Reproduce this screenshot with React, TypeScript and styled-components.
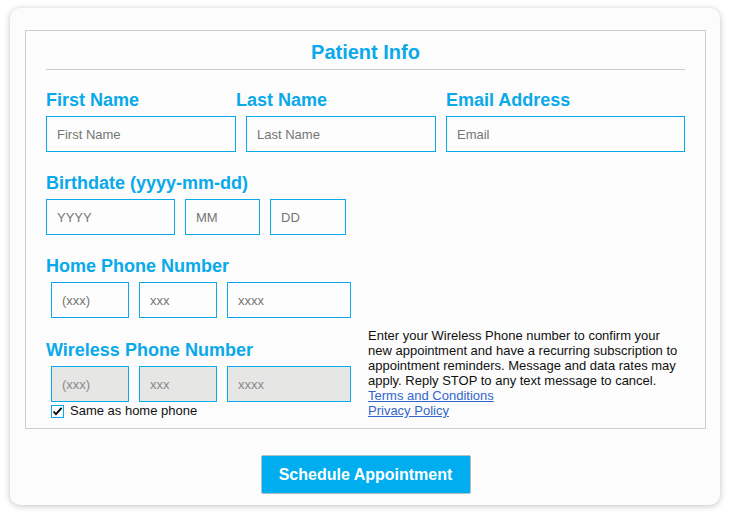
import React from "react";
import styled, { createGlobalStyle } from "styled-components";

const BLUE = "#0aa9e9";

const GlobalStyle = createGlobalStyle`
  body {
    margin: 0;
    background: #ffffff;
    font-family: "Liberation Sans", Arial, sans-serif;
  }
`;

const Card = styled.div`
  box-sizing: border-box;
  width: 710px;
  height: 497px;
  margin: 8px 10px;
  padding: 22px 14px 11px 15px;
  background: #fbfcfb;
  border-radius: 10px;
  box-shadow: 0 1px 6px rgba(0, 0, 0, 0.24);
`;

const Panel = styled.div`
  border: 1px solid #cccccc;
  padding: 9px 20px 10px;
`;

const Title = styled.h2`
  margin: 0;
  text-align: center;
  font-size: 20px;
  line-height: 24px;
  font-weight: bold;
  color: ${BLUE};
`;

const Rule = styled.hr`
  margin: 5px 0 19px;
  border: none;
  border-top: 1px solid #cccccc;
  height: 0;
`;

const NameRow = styled.div`
  display: grid;
  grid-template-columns: 190px 190px 1fr;
  column-gap: 10px;
`;

const Section = styled.div`
  margin-top: 20px;
`;

const Label = styled.label<{ $shift?: number }>`
  display: block;
  font-size: 18px;
  line-height: 22px;
  font-weight: bold;
  color: ${BLUE};
  margin: 0 0 5px ${(p) => p.$shift ?? 0}px;
  white-space: nowrap;
`;

const InputRow = styled.div<{ $indent?: number }>`
  display: flex;
  gap: 10px;
  padding-left: ${(p) => p.$indent ?? 0}px;
`;

const Input = styled.input<{ $width?: number; $muted?: boolean }>`
  box-sizing: border-box;
  width: ${(p) => (p.$width ? `${p.$width}px` : "100%")};
  height: 36px;
  margin: 0;
  padding: 0 10px;
  border: 1px solid ${BLUE};
  border-radius: 0;
  background: ${(p) => (p.$muted ? "#e6e6e4" : "#fcfdfc")};
  font-family: "Liberation Sans", Arial, sans-serif;
  font-size: 13px;
  color: #333;
  outline: none;

  &::placeholder {
    color: ${(p) => (p.$muted ? "#8a8a8a" : "#757575")};
  }
`;

const BottomRow = styled.div`
  display: flex;
  align-items: flex-end;
  margin-top: 10px;
`;

const WirelessCol = styled.div`
  width: 322px;
  flex-shrink: 0;
`;

const CheckRow = styled.label`
  display: flex;
  align-items: center;
  gap: 6px;
  margin: 2px 0 0 5px;
  height: 14px;
  font-size: 13px;
  line-height: 14px;
  color: #111;
`;

const CheckBox = styled.span`
  box-sizing: border-box;
  width: 13px;
  height: 13px;
  border: 1px solid ${BLUE};
  background: #fff;
  display: flex;
  align-items: center;
  justify-content: center;
`;

const Notice = styled.p`
  width: 313px;
  margin: 0;
  font-size: 13px;
  line-height: 15px;
  color: #111;
`;

const Link = styled.a`
  display: block;
  color: #3366cc;
  text-decoration: underline;
  width: fit-content;
`;

const ButtonBar = styled.div`
  display: flex;
  justify-content: center;
  margin-top: 26px;
`;

const Button = styled.button`
  box-sizing: border-box;
  width: 210px;
  height: 39px;
  background: #00aeef;
  border: 1px solid #b0bec5;
  border-radius: 2px;
  color: #fff;
  font-family: "Liberation Sans", Arial, sans-serif;
  font-size: 16px;
  font-weight: bold;
  cursor: pointer;
`;

const nameFields = [
  { label: "First Name", placeholder: "First Name", shift: 0 },
  { label: "Last Name", placeholder: "Last Name", shift: -10 },
  { label: "Email Address", placeholder: "Email", shift: 0 },
];

const phoneParts = [
  { placeholder: "(xxx)", width: 78 },
  { placeholder: "xxx", width: 78 },
  { placeholder: "xxxx", width: 124 },
];

export default function App() {
  return (
    <>
      <GlobalStyle />
      <Card>
        <Panel>
          <Title>Patient Info</Title>
          <Rule />
          <NameRow>
            {nameFields.map((f) => (
              <div key={f.label}>
                <Label $shift={f.shift}>{f.label}</Label>
                <Input placeholder={f.placeholder} />
              </div>
            ))}
          </NameRow>

          <Section>
            <Label>Birthdate (yyyy-mm-dd)</Label>
            <InputRow>
              <Input $width={129} placeholder="YYYY" />
              <Input $width={75} placeholder="MM" />
              <Input $width={76} placeholder="DD" />
            </InputRow>
          </Section>

          <Section>
            <Label>Home Phone Number</Label>
            <InputRow $indent={5}>
              {phoneParts.map((p) => (
                <Input key={p.placeholder} $width={p.width} placeholder={p.placeholder} />
              ))}
            </InputRow>
          </Section>

          <BottomRow>
            <WirelessCol>
              <Label>Wireless Phone Number</Label>
              <InputRow $indent={5}>
                {phoneParts.map((p) => (
                  <Input
                    key={p.placeholder}
                    $width={p.width}
                    $muted
                    disabled
                    placeholder={p.placeholder}
                  />
                ))}
              </InputRow>
              <CheckRow>
                <CheckBox>
                  <svg width="11" height="11" viewBox="0 0 11 11">
                    <path d="M1.5 5.5 L4 8.2 L9.6 1.8" fill="none" stroke="#000" strokeWidth="1.8" />
                  </svg>
                </CheckBox>
                Same as home phone
              </CheckRow>
            </WirelessCol>
            <Notice>
              Enter your Wireless Phone number to confirm your new appointment and have a
              recurring subscription to appointment reminders. Message and data rates may
              apply. Reply STOP to any text message to cancel.
              <Link href="#">Terms and Conditions</Link>
              <Link href="#">Privacy Policy</Link>
            </Notice>
          </BottomRow>
        </Panel>
        <ButtonBar>
          <Button>Schedule Appointment</Button>
        </ButtonBar>
      </Card>
    </>
  );
}
